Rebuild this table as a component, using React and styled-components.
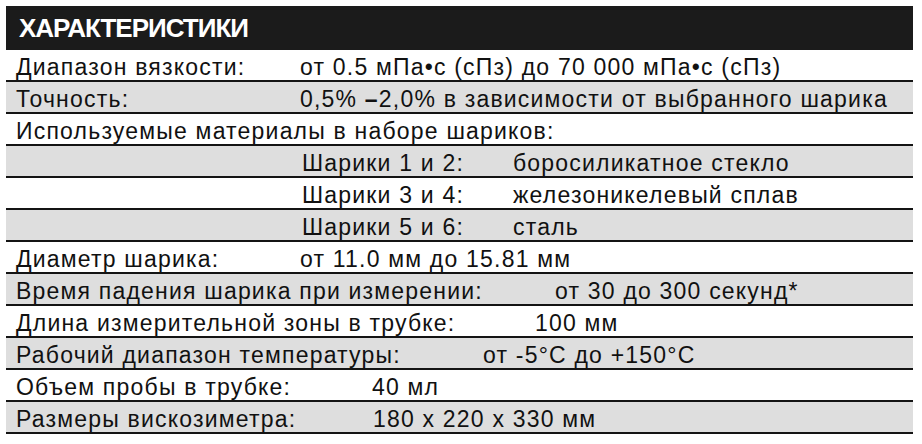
import React from 'react';
import styled, { createGlobalStyle } from 'styled-components';

const GlobalStyle = createGlobalStyle`
  html, body {
    margin: 0;
    padding: 0;
    background: #ffffff;
  }
  body {
    font-family: 'Liberation Sans', Arial, sans-serif;
    color: #111111;
  }
`;

const Page = styled.div`
  width: 922px;
  height: 444px;
  padding: 6px 0 0 6px;
  box-sizing: border-box;
  overflow: hidden;
`;

const Table = styled.div`
  width: 907px;
  display: flex;
  flex-direction: column;
`;

const Header = styled.div`
  height: 44px;
  background: #1b1b1b;
  display: flex;
  align-items: center;
  padding-left: 13px;
  box-sizing: border-box;
  color: #ffffff;
  font-size: 26px;
  font-weight: 700;
  letter-spacing: -1px;
`;

const Row = styled.div`
  height: 32px;
  box-sizing: border-box;
  border-bottom: 2px solid #141414;
  background: ${({ shaded }) => (shaded ? '#dedede' : '#ffffff')};
  display: grid;
  grid-template-columns: ${({ split }) => (split ? `${split}px 1fr` : '1fr')};
  align-items: end;
  padding-left: ${({ indent }) => 10 + (indent || 0)}px;
  font-size: 23px;
  line-height: 23px;
  letter-spacing: 1.2px;
  padding-bottom: 1px;
  white-space: nowrap;
`;

const Cell = styled.span``;

const Dash = styled.span`
  font-weight: 700;
`;

const rows = [
  { label: 'Диапазон вязкости:', value: 'от 0.5 мПа•с (сПз) до 70 000 мПа•с (сПз)', split: 284 },
  {
    label: 'Точность:',
    value: (
      <>
        0,5% <Dash>–</Dash>2,0% в зависимости от выбранного шарика
      </>
    ),
    split: 284,
  },
  { label: 'Используемые материалы в наборе шариков:' },
  { label: 'Шарики 1 и 2:', value: 'боросиликатное стекло', split: 211, indent: 286 },
  { label: 'Шарики 3 и 4:', value: 'железоникелевый сплав', split: 211, indent: 286 },
  { label: 'Шарики 5 и 6:', value: 'сталь', split: 211, indent: 286 },
  { label: 'Диаметр шарика:', value: 'от 11.0 мм до 15.81 мм', split: 284 },
  { label: 'Время падения шарика при измерении:', value: 'от 30 до 300 секунд*', split: 539 },
  { label: 'Длина измерительной зоны в трубке:', value: '100 мм', split: 519 },
  { label: 'Рабочий диапазон температуры:', value: 'от -5°C до +150°C', split: 467 },
  { label: 'Объем пробы в трубке:', value: '40 мл', split: 356 },
  { label: 'Размеры вискозиметра:', value: '180 х 220 х 330 мм', split: 357 },
];

export default function App() {
  return (
    <Page>
      <GlobalStyle />
      <Table>
        <Header>ХАРАКТЕРИСТИКИ</Header>
        {rows.map((r, i) => (
          <Row key={i} shaded={i % 2 === 1} split={r.split} indent={r.indent}>
            <Cell>{r.label}</Cell>
            {r.value && <Cell>{r.value}</Cell>}
          </Row>
        ))}
      </Table>
    </Page>
  );
}
